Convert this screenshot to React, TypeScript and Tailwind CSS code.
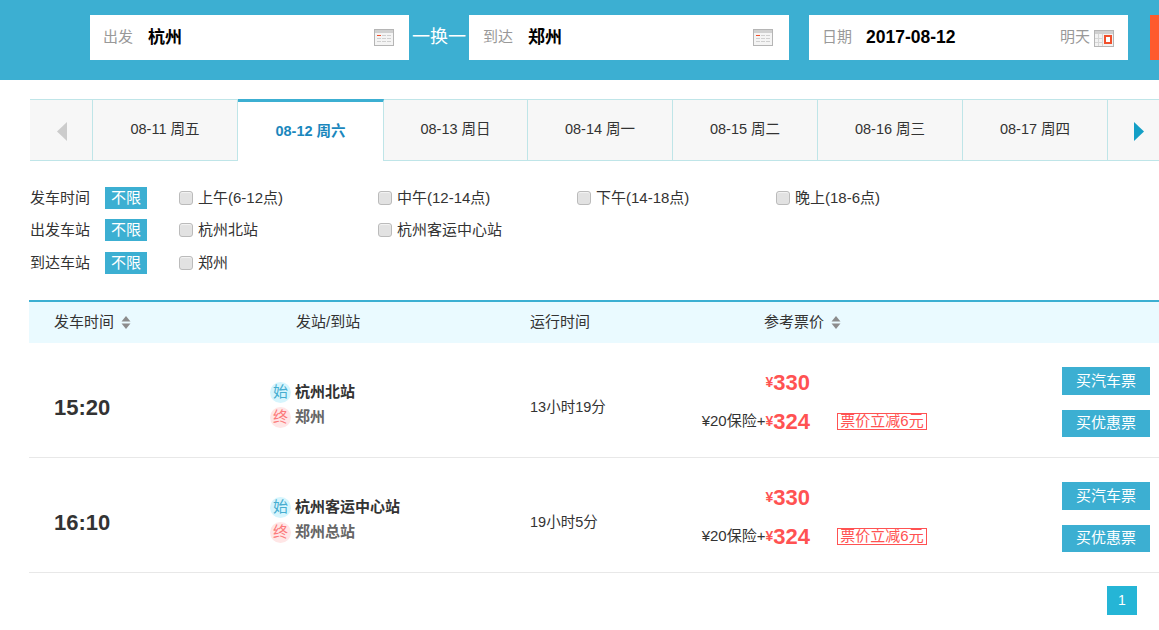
const days = [
  { label: '08-11 周五', width: 'w-[145px]' },
  { label: '08-12 周六', width: 'w-[146px]', active: true },
  { label: '08-13 周日', width: 'w-[144px]' },
  { label: '08-14 周一', width: 'w-[145px]' },
  { label: '08-15 周二', width: 'w-[145px]' },
  { label: '08-16 周三', width: 'w-[145px]' },
  { label: '08-17 周四', width: 'w-[145px]' },
];

const filters = [
  { title: '发车时间', options: ['上午(6-12点)', '中午(12-14点)', '下午(14-18点)', '晚上(18-6点)'] },
  { title: '出发车站', options: ['杭州北站', '杭州客运中心站'] },
  { title: '到达车站', options: ['郑州'] },
];

const trips = [
  { time: '15:20', from: '杭州北站', to: '郑州', duration: '13小时19分' },
  { time: '16:10', from: '杭州客运中心站', to: '郑州总站', duration: '19小时5分' },
];

function CalendarIcon() {
  return (
    <svg width="20" height="17" viewBox="0 0 20 17" className="mb-[1px] shrink-0">
      <rect x="0.500" y="0.500" width="19" height="16" fill="#f4f4f4" stroke="#b5b5b5" />
      <rect x="1" y="1" width="18" height="3" fill="#d0d0d0" />
      <rect x="3" y="6" width="4" height="1" fill="#f0502d" />
      <path d="M8 6h4v1H8zM13 6h4v1h-4zM3 9h4v1H3zM8 9h4v1H8zM13 9h4v1h-4zM3 12h4v1H3zM8 12h4v1H8zM13 12h4v1h-4z" fill="#cfcfcf" />
    </svg>
  );
}

function DateIcon() {
  return (
    <svg width="20" height="17" viewBox="0 0 20 17" className="mt-[2px] shrink-0">
      <rect x="0.500" y="0.500" width="19" height="16" fill="#f2f2f2" stroke="#b5b5b5" />
      <rect x="1" y="1" width="18" height="3" fill="#d0d0d0" />
      <path d="M4.500 4v12M8.500 4v12M1 8.500h8M1 12.500h8" stroke="#d6d6d6" />
      <rect x="11" y="6" width="6" height="7" fill="#fff" stroke="#f0502d" strokeWidth="2" />
    </svg>
  );
}

function SortIcon() {
  return (
    <svg width="10" height="13" viewBox="0 0 10 13" className="shrink-0">
      <path d="M5 0l4.500 5.500h-9z" fill="#8c8c8c" />
      <path d="M5 13l4.500-5.500h-9z" fill="#8c8c8c" />
    </svg>
  );
}

function SearchField({ label, value, className }: { label: string; value: string; className: string }) {
  return (
    <div className={`flex h-[45px] shrink-0 items-center bg-white pl-[13px] ${className}`}>
      <span className="w-[45px] text-[15px] text-[#999]">{label}</span>
      <span className="flex-1 text-[17px] font-bold text-black">{value}</span>
      <CalendarIcon />
    </div>
  );
}

function Badge({ text, tone }: { text: string; tone: 'start' | 'end' }) {
  return (
    <span
      className={
        tone === 'start'
          ? 'mr-[4px] flex h-[21px] w-[21px] items-center justify-center rounded-full bg-[#d6f5fd] text-[15px] font-normal text-[#45add0]'
          : 'mr-[4px] flex h-[21px] w-[21px] items-center justify-center rounded-full bg-[#ffe6e6] text-[15px] font-normal text-[#fc7a7a]'
      }
    >
      {text}
    </span>
  );
}

function TripRow({ trip }: { trip: (typeof trips)[number] }) {
  return (
    <div className="flex h-[115px] items-center border-b border-[#e8e8e8]">
      <div className="w-[241px] pl-[25px] pt-[15px] text-[22px] font-bold text-[#333]">{trip.time}</div>
      <div className="flex w-[260px] flex-col gap-[4px] pt-[9px] text-[15px] font-bold">
        <div className="flex h-[21px] items-center text-[#333]">
          <Badge text="始" tone="start" />
          {trip.from}
        </div>
        <div className="flex h-[21px] items-center text-[#666]">
          <Badge text="终" tone="end" />
          {trip.to}
        </div>
      </div>
      <div className="w-[160px] pt-[16px] text-[14.500px] text-[#333]">{trip.duration}</div>
      <div className="flex w-[237px] flex-col gap-[12px] pt-[3px]">
        <div className="flex h-[27px] w-[120px] items-center justify-end">
          <span className="text-[14px] font-bold text-[#ff5252]">¥</span>
          <span className="text-[22px] font-bold text-[#ff5252]">330</span>
        </div>
        <div className="flex h-[27px] items-center">
          <div className="flex w-[120px] items-center justify-end whitespace-nowrap">
            <span className="text-[15px] text-[#333]">¥20保险+</span>
            <span className="text-[14px] font-bold text-[#ff5252]">¥</span>
            <span className="text-[22px] font-bold text-[#ff5252]">324</span>
          </div>
          <span className="ml-[27px] flex h-[17px] w-[90px] items-center justify-center whitespace-nowrap border border-[#ff5252] text-[15px] text-[#ff5252]">
            票价立减6元
          </span>
        </div>
      </div>
      <div className="ml-auto mr-[9px] mt-[4px] flex flex-col gap-[15px]">
        <button className="h-[28px] w-[88px] bg-[#3cafd2] text-[15px] text-white">买汽车票</button>
        <button className="h-[27px] w-[88px] bg-[#3cafd2] text-[15px] text-white">买优惠票</button>
      </div>
    </div>
  );
}

export default function App() {
  return (
    <div className="h-[630px] w-[1159px] overflow-hidden bg-white font-['Liberation_Sans','Noto_Sans_CJK_SC',sans-serif] text-[#333]">
      <div className="flex h-[80px] items-start bg-[#3cafd2] pl-[90px] pt-[15px]">
        <SearchField label="出发" value="杭州" className="w-[319px] pr-[15px]" />
        <div className="flex h-[45px] w-[60px] shrink-0 items-center justify-center whitespace-nowrap text-[18px] text-white">
          一换一
        </div>
        <SearchField label="到达" value="郑州" className="w-[320px] pl-[14px] pr-[16px]" />
        <div className="ml-[20px] flex h-[45px] w-[319px] shrink-0 items-center bg-white pl-[13px] pr-[14px]">
          <span className="w-[44px] text-[15px] text-[#999]">日期</span>
          <span className="flex-1 text-[17.500px] font-bold text-black">2017-08-12</span>
          <span className="mr-[4px] text-[15px] text-[#999]">明天</span>
          <DateIcon />
        </div>
        <div className="ml-[22px] h-[45px] w-[10px] shrink-0 bg-[#ff5a2c]" />
      </div>

      <div className="ml-[30px] mt-[19px] flex h-[62px]">
        <div className="flex w-[63px] items-center justify-center border-y border-r border-[#bfe5e8] bg-[#f7f7f7] pl-[2px] pt-[2px]">
          <svg width="10" height="19" viewBox="0 0 10 19">
            <path d="M10 0v19L0 9.500z" fill="#cccccc" />
          </svg>
        </div>
        {days.map((day) =>
          day.active ? (
            <div
              key={day.label}
              className={`flex ${day.width} items-center justify-center border-r border-t-[3px] border-[#bfe5e8] border-t-[#3cafd2] bg-white text-[14.500px] font-bold text-[#1a87bd]`}
            >
              {day.label}
            </div>
          ) : (
            <div
              key={day.label}
              className={`flex ${day.width} items-center justify-center border-y border-r border-[#bfe5e8] bg-[#f7f7f7] text-[14.500px] text-[#333]`}
            >
              {day.label}
            </div>
          ),
        )}
        <div className="flex flex-1 items-center justify-center border-y border-[#bfe5e8] bg-[#f7f7f7] pl-[10px] pt-[2px]">
          <svg width="10" height="19" viewBox="0 0 10 19">
            <path d="M0 0v19L10 9.500z" fill="#149fc6" />
          </svg>
        </div>
      </div>

      <div className="ml-[30px] mt-[21px] flex flex-col">
        {filters.map((row) => (
          <div key={row.title} className="flex h-[32px] items-center text-[15px] last:mt-[1px]">
            <span className="w-[75px]">{row.title}</span>
            <span className="flex h-[22px] w-[42px] items-center justify-center bg-[#3cafd2] text-white">不限</span>
            <div className="ml-[32px] flex">
              {row.options.map((option) => (
                <label key={option} className="flex w-[199px] items-center gap-[5px] whitespace-nowrap">
                  <span className="h-[14px] w-[14px] rounded-[3px] border border-[#bbb] bg-[#e2e2e2] shadow-[inset_0_1px_1px_#f4f4f4]" />
                  {option}
                </label>
              ))}
            </div>
          </div>
        ))}
      </div>

      <div className="ml-[29px] mt-[21px]">
        <div className="flex h-[43px] items-center border-t-2 border-[#3cafd2] bg-[#eafaff] text-[15px]">
          <div className="flex w-[267px] items-center gap-[7px] pl-[25px]">
            发车时间 <SortIcon />
          </div>
          <div className="w-[234px]">发站/到站</div>
          <div className="w-[234px]">运行时间</div>
          <div className="flex items-center gap-[7px]">
            参考票价 <SortIcon />
          </div>
        </div>
        {trips.map((trip) => (
          <TripRow key={trip.time} trip={trip} />
        ))}
      </div>

      <div className="mr-[22px] mt-[13px] flex justify-end">
        <div className="flex h-[29px] w-[30px] items-center justify-center bg-[#25b5d6] text-[14px] text-white">1</div>
      </div>
    </div>
  );
}
